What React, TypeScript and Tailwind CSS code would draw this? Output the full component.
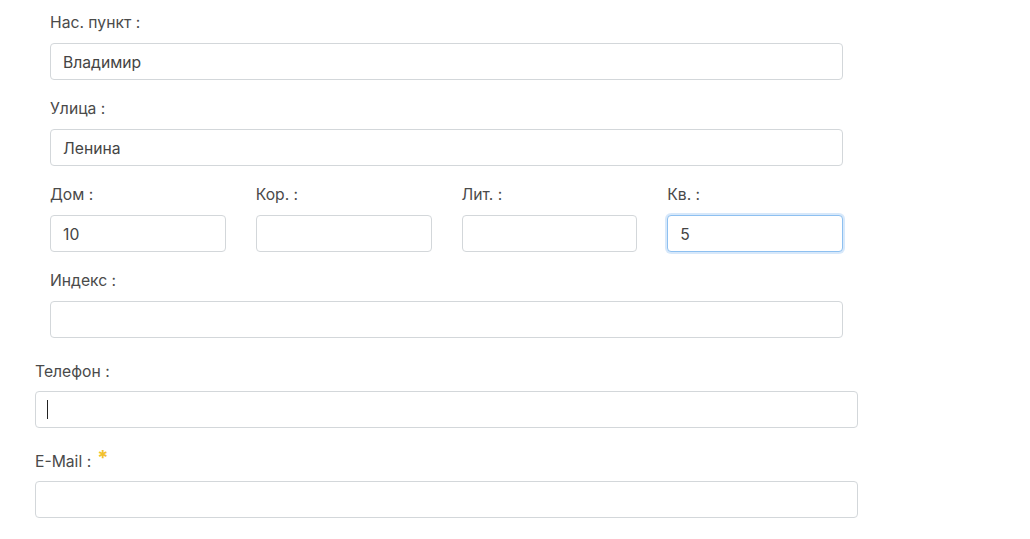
import React from "react";

const FONT = { fontFamily: 'Inter, "Noto Sans", sans-serif' };

function Field({
  label,
  value,
  focused,
  required,
  caret,
}: {
  label: string;
  value?: string;
  focused?: boolean;
  required?: boolean;
  caret?: boolean;
}) {
  return (
    <div className="flex flex-col">
      <label className="text-[15.7px] leading-[22px] pt-[1px] text-[#4a4a4a] mb-[9px] flex items-start">
        {label}
        {required && (
          <span className="text-[#f2c12e] text-[20px] leading-[14px] ml-[6px] font-bold">*</span>
        )}
      </label>
      <div className="relative">
        <input
          readOnly
          defaultValue={value}
          className={`w-full h-[37px] rounded-[4px] bg-white px-[12px] pt-[2px] text-[15.7px] text-[#444] outline-none border ${
            focused
              ? "border-[#8ec0f0] shadow-[0_0_0_2px_rgba(140,190,240,0.35)]"
              : "border-[#d3d7da]"
          }`}
        />
        {caret && <span className="absolute left-[12px] top-[9px] w-px h-[19px] bg-[#222]" />}
      </div>
    </div>
  );
}

export default function App() {
  return (
    <div className="w-[1030px] h-[539px] bg-white overflow-hidden" style={FONT}>
      <div className="pl-[35px] w-[858px] pt-[11px] flex flex-col">
        <div className="px-[15px] flex flex-col gap-[17px]">
          <Field label="Нас. пункт :" value="Владимир" />
          <Field label="Улица :" value="Ленина" />
          <div className="grid grid-cols-4 gap-[30px]">
            <Field label="Дом :" value="10" />
            <Field label="Кор. :" />
            <Field label="Лит. :" />
            <Field label="Кв. :" value="5" focused />
          </div>
          <Field label="Индекс :" />
        </div>
        <div className="mt-[22px] flex flex-col gap-[22px]">
          <div className="[&_label]:mb-[8px]">
            <Field label="Телефон :" caret />
          </div>
          <div className="[&_label]:mb-[8px]">
            <Field label="E-Mail :" required />
          </div>
        </div>
      </div>
    </div>
  );
}
